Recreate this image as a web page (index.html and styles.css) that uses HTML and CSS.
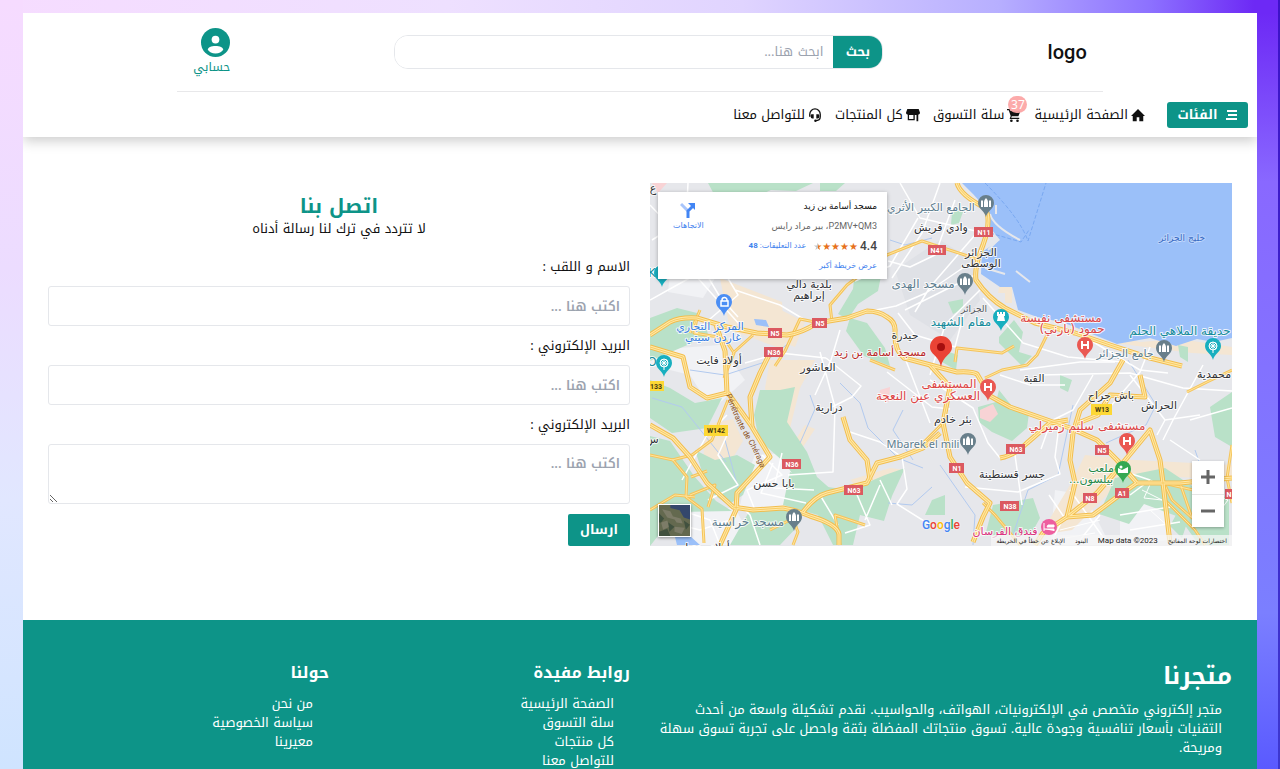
FILE: index.html
```html
<!DOCTYPE html>
<html lang="ar" dir="rtl">
<head>
<meta charset="utf-8">
<meta name="viewport" content="width=device-width, initial-scale=1">
<title>اتصل بنا</title>
<link rel="stylesheet" href="styles.css">
</head>
<body>
<div class="page">
  <header class="header">
    <div class="topbar">
      <a class="logo" href="#">logo</a>
      <form class="search">
        <button class="search-button" type="button">بحث</button>
        <input class="search-input" type="search" placeholder="ابحث هنا..." aria-label="بحث">
      </form>
      <a class="account" href="#">
        <svg class="account-icon" viewBox="0 0 30 30" aria-hidden="true"><circle cx="15" cy="15" r="15" fill="#0d9488"/><circle cx="15" cy="12" r="4" fill="#fff"/><path d="M7 22.5c0-2.700 3.600-4 8-4s8 1.300 8 4c-1.500 2.400-4.400 4-8 4s-6.500-1.600-8-4Z" fill="#fff"/></svg>
        <span>حسابي</span>
      </a>
    </div>
    <nav class="nav">
      <button class="categories" type="button">
        <svg class="menu-icon" viewBox="0 0 12 12" aria-hidden="true"><path d="M1 2h10M2 6h9M0 10h11" stroke="#fff" stroke-width="2"/></svg>
        <span>الفئات</span>
      </button>
      <a class="nav-link" href="#">
        <svg class="nav-icon" viewBox="0 0 16 16" aria-hidden="true"><path d="M8 1 0 9H2V15H6.500V10.500h3V15H14V9h2Z"/></svg>
        <span>الصفحة الرئيسية</span>
      </a>
      <a class="nav-link" href="#">
        <svg class="nav-icon" viewBox="0 0 16 16" aria-hidden="true"><path d="M0 1h3l1 2h11.500L13 9.500H5.500L4.800 11H14v1.500H3L4.200 9 2 2.500H0Z"/><circle cx="5" cy="14.500" r="1.500"/><circle cx="12" cy="14.500" r="1.500"/></svg>
        <span class="badge">37</span>
        <span>سلة التسوق</span>
      </a>
      <a class="nav-link" href="#">
        <svg class="nav-icon" viewBox="0 0 16 16" aria-hidden="true"><path d="M1.500 1h13L16 5.500c0 1.500-1 2-2 2V15h-2V8H10v6H2V7.500c-1 0-2-.5-2-2ZM3.500 8v4.500h5V8Z" fill-rule="evenodd"/></svg>
        <span>كل المنتجات</span>
      </a>
      <a class="nav-link" href="#">
        <svg class="nav-icon" viewBox="0 0 16 16" aria-hidden="true"><path d="M2 10V7a6 6 0 0 1 12 0v3c0 3-2 4.500-5.500 4.500" fill="none" stroke="#111" stroke-width="1.500"/><path d="M4 7h2.500v5H5Q3 12 3 9.500T4 7ZM9.500 7H12q1 0 1 2.500T11 12H9.500Z"/><circle cx="8.500" cy="14.500" r="1.400"/></svg>
        <span>للتواصل معنا</span>
      </a>
    </nav>
  </header>

  <main class="contact">
    <section class="map" aria-label="خريطة">
      <svg class="map-canvas" viewBox="650 183 582 363" preserveAspectRatio="xMidYMid slice" role="img" aria-label="خريطة الجزائر">
        <defs>
          <g id="pin"><path d="M0 13C-1 7-8 5-8-1a8 8 0 0 1 16 0C8 5 1 7 0 13Z"/></g>
          <g id="mosque" fill="#fff"><path d="M-5 3v-6l1-1 1 1v6ZM3 3v-6l1-1 1 1v6ZM-2 3v-5Q-2-4 0-6 2-4 2-2v5Z"/></g>
          <g id="hospital"><path d="M-3-5V3M3-5V3M-3-1H3" stroke="#fff" stroke-width="2" fill="none"/></g>
          <g id="roads">
            <path d="M957 183q3 12 28 25 7 12-2 37-9 22-7 35 12 18 29 28l30 15 40 10 35 12 40 13 32 8"/>
            <path d="M650 335l20-13q10-5 27-4l30 9 30 6 30 2q15-2 30-12l30-5 20-7q12 0 20 6 9 5 8 15-1 18 9 26l53 14q14-1 20 2l13 22 20 11 60 21 27 12 20 20 20 23 43 0 52-5"/>
            <path d="M650 425l23 13 17 19 17 26 26 24 20 3 30-2q16 3 27 8 27 8 29 18l0 11"/>
            <path d="M650 347l33 10 7 30 17 11 20-5-2-42-9-26M770 353l-10 20-10 24 2 30 18 30-33 36-1 17-16 35M728 393l25 35"/>
            <path d="M803 512q12-16 24-19l40-10 10-20 23-6 23-9 17-15M843 417l7 23 17 20 3 20"/>
            <path d="M930 365l20 22-7 36 7 34 17 26 23 20-7 14-10 25"/>
            <path d="M1123 360l-13 23-30 27-7 23-3 27 5 23-8 34-24 16-8 12"/>
            <path d="M1067 517l30-24 20-23 33-40 10 30 3 23 7 60M1067 517l26-2 24-18 20-14M1000 458q15-3 27-15l23-20 18-3M1078 423l20-8 12-20 35 2-5-22"/>
          </g>
          <g id="minor-roads">
            <path d="M650 455l23 5 14 17-1 20 16 12 2 34M672 460l20-5 20-15 16-40M691 477l16-6M690 495l25-10-7 22M650 510l25-15 20 2"/>
            <path d="M955 362l2-14 45 5 12-7M1047 335l-10 20-10 10-25 5-17 8M832 322l-2-17 17-20 40-30 35-14 55 18M820 323l-20-4-8 17-7 15-10 15M697 318l-3 15 30 5 10 15-10 25M700 310l-10 23M733 353l20-18"/>
            <path d="M1187 392l20-10 25-12M1232 445l-5 33 5 25M1180 483l12 35-20-18-8-17M1163 483l30 7 27-8M840 545l-5-30 30 10M1165 500l30 30 10 15M790 512l8 20-5 13M770 530l30-15M943 423l-25 25M1020 545l-25-30-12-12M870 360l25 10"/>
          </g>
        </defs>
        <rect x="650" y="183" width="582" height="363" fill="#e6e7eb"/>
        <g fill="#f1f2f5">
          <path d="M652 350 720 345 745 380 712 410 690 375 650 365Z"/>
          <path d="M755 455 790 453 812 490 800 512 740 506 745 480Z"/>
          <path d="M672 255 720 270 703 298 668 292Z"/>
          <path d="M680 508h55l20 37h-75Z"/><path d="M1055 490l30 5 25 50h-60Z"/>
          <path d="M1120 510l45-15 5 45-50 5Z"/>
        </g>
        <path d="M895 270 940 240 972 260 980 300 950 340 910 315Z" fill="#dfe1e6"/>
        <g fill="#f4e6d3">
          <path d="M720 278 782 302 785 350 730 330Z"/><path d="M770 360h45l-15 28-10 40 5 20-12 8-18-68Z"/>
          <path d="M705 425l28-6 10 22-22 37-18-10Z"/><path d="M775 307l30 15-10 25-25-10Z"/>
          <path d="M1000 283h12v20h-7v-10h-7ZM1065 325l75 17 40-3 52 8v8l-40-2-70-9Z"/>
          <path d="M1085 455l50 5 97 5v15l-90-5-25 10-45 45-32 5 30-50Z"/><path d="M850 480l40-12 15 2-15 12-30 8Z"/>
          <path d="M805 425l10 4-20 30-4-12Z"/>
        </g>
        <g fill="#b9e1c8">
          <path d="M708 183h105l-17 8-25-1-18 8h-37ZM820 183h25l-9 8h-16Z"/>
          <path d="M650 318l27-10 20 5-5 30-42 18ZM686 325l20 2 3 11-18 4Z"/>
          <path d="M850 318l17 5 18 25 5 18-26-10-18-25Z"/><path d="M855 270l28-4-5 25-20 13-10 15-10-5 15-25Z"/>
          <path d="M760 390l20 0 15-3-8 35 20 30 10 25 17 15-25 5-25-35-25-22-5-25Z"/>
          <path d="M650 380l20 8 25 15 27-5-15 30-35 5-22-15Z"/>
          <path d="M650 436l20 5 24 35 22 25 16 10-55 1-27 34ZM695 450l20 10 22-5 18 10-12 30-15 10-20-15Z"/>
          <path d="M790 472l30 14 30 4 35-15 20-7-13 28-8 25-24-6-7 30h-20l-15-30-35-10ZM750 510l38-2 10 18-18 19h-50Z"/>
          <path d="M978 407l18-5 3-12 12 15 18 8-2 15-15 13-20-9-13-10Z"/>
          <path d="M999 337l15-17 9 12-4 20 13 4-10 10-23-23Z"/><path d="M948 302l15-3v10l-10 5ZM943 350l15 5-2 15-14-8ZM952 212l12-3-5 14-8 2Z"/>
          <path d="M1115 478l50-10 30 20 34 10v47h-30l-20-28-35-13-15 20-30-10 10-22Z"/>
          <path d="M993 505l40-7 7 20-10 18h-45ZM1210 407l22-15v55l-17-10ZM932 500l13-5v20h-20ZM1178 345l10 2v15l-8-5Z"/>
          <path d="M1060 375l12 5-4 12-8-4ZM1177 513l10 10-5 15-12-12Z"/>
        </g>
        <path fill="#9bc0f9" d="M962 183H1232V338L1214 342 1197 339 1176 346 1150 338 1117 344 1082 330 1062 322 1040 318 1018 310 1012 287H1000L981 274 982 252 1000 240 988 225 984 206 973 194Z"/>
        <path d="M996 205v9M990 214q3 12 30 26M1016 271l14 11M985 268l20 6M988 250l10-10" stroke="#e6e7eb" stroke-width="2" fill="none"/>
        <path d="M985 183q35 35 43 58l18-58M990 233l31 9 8-12" stroke="#79a8f1" fill="none" stroke-dasharray="4 2"/>
        <g fill="#9bc0f9"><path d="M675 537l15-1 10 9h-23ZM754 319l12 1 3 7-13-2Z"/></g>
        <g fill="#f8d3d5"><path d="M980 410l13-6 5 10-8 8-10-4ZM880 390l10-3-1 15-10-4ZM652 183h15l-9 10Z"/></g>
        <g fill="none" stroke="#b2caef">
          <path d="M690 370l35 5 40-13 25-20M652 398l30 9 20 25 24 30M800 443l15-34-5-14M840 383l20 20 8 25 30 30 25 10M903 410l-10 20 20 30M1073 405l-15 70-30 15-15 45M940 465l35 50-2 30M1128 360l28 45-10 20-40 18M1195 450l7 20-8 30M890 240l15 5 27-7M725 440l15 55M888 503l24 2 20-18"/>
        </g>
        <g class="streets">
          <path d="M652 240l40-25 12-20M650 205l40 42 30 50 18 20M688 183l-3 60-33 28M670 250l50 15 18 30-35 30M735 290l45 15 25 15M650 300l45-25 45 50"/>
          <path d="M900 183l20 35 60 14M918 218l-28 48-35 15M940 183l-18 50-30 45M955 200l-20 55-25 12-22-6M975 235l-45 52-15 25M970 263l-44 30-30 13-25 5M975 275l-70 35M980 290l-35 35-15 50M965 309l-10 38-40-12-17-22M983 298l40 45 45 14 55 5"/>
          <path d="M820 352l15 55-2 65-45 3M832 407l20-10 9-11-35-28M840 330l-9 30-16 35M826 358l-46-5-35 10M905 358l25 65M887 372l45 35 18 2M850 432l30 10 22 15 5 32-10 15 35 22"/>
          <path d="M1020 370l60-8 35 0M1040 375l90-2 53 15 49 3M1060 418l-5 39 5 17-42 18-53-5M1015 455l7 50M930 380l43 28 15 35 12 15M1130 375l35 45-8 15M1150 347l-10 25-30 35-30 15M1000 375l30 10 35 0M1093 375l-20 35-22 11-10 28M1165 420l35-5M1203 365l-30 55-10 20M1090 340l50 30 28 3"/>
          <path d="M740 505l10 10 10 30M708 500l30-15-20-30 10-22M682 480l25-45 20-20M680 510l30 10 10 25M660 520l40 10 30-10M762 455l20 20-35 15 8 20M773 463l-12 30 45 10M782 453l-8 35 40 2M855 490l15 35-25 8M880 485l-15 35M820 495l18 30M880 480l12 25"/>
          <path d="M1070 490l35 50M1080 540l20-25M1120 515l50-8M1130 530l50-8M1120 470l30 10-20 15M1170 440l30 20M1190 420l42-12M1050 545l14-28-15-22"/>
        </g>
        <path d="M1200 490l28 10-15 20M1150 510l20 18M1142 490l20 10-18-2 8-18M1060 530l40-10M1065 538l30-5" stroke="#fff" fill="none"/>
        <use href="#minor-roads" class="minor-edge"/>
        <use href="#minor-roads" class="minor-middle"/>
        <use href="#roads" class="road-edge"/>
        <use href="#roads" class="road-middle"/>
        <use href="#roads" class="road-divider"/>
        <g class="shields">
          <g fill="#db5960"><rect x="974" y="227" width="19" height="10"/><rect x="928" y="245" width="18" height="10"/><rect x="812" y="318" width="15" height="10"/><rect x="768" y="328" width="14" height="10"/><rect x="764" y="347" width="19" height="10"/><rect x="782" y="459" width="19" height="10"/><rect x="844" y="485" width="19" height="10"/><rect x="949" y="463" width="15" height="10"/><rect x="1006" y="444" width="19" height="10"/><rect x="1095" y="445" width="14" height="10"/><rect x="1000" y="501" width="19" height="10"/><rect x="1083" y="493" width="14" height="10"/><rect x="1115" y="488" width="14" height="10"/><rect x="1225" y="489" width="14" height="10"/></g>
          <g fill="#fdd835"><rect x="1091" y="404" width="21" height="11"/><rect x="704" y="425" width="24" height="11"/><rect x="644" y="381" width="20" height="10"/></g>
          <g class="shield-light"><text x="984" y="235">N11</text><text x="937" y="253">N41</text><text x="820" y="326">N5</text><text x="775" y="336">N5</text><text x="774" y="355">N36</text><text x="792" y="467">N36</text><text x="854" y="493">N63</text><text x="957" y="471">N1</text><text x="1016" y="452">N63</text><text x="1102" y="453">N5</text><text x="1010" y="509">N38</text><text x="1090" y="501">N8</text><text x="1122" y="496">A1</text><text x="1229" y="497">N</text></g>
          <g class="shield-dark"><text x="1102" y="412">W13</text><text x="716" y="433">W142</text><text x="656" y="389">133</text></g>
        </g>
        <g class="labels">
          <g class="town"><text x="941" y="231">وادي قريش</text><text x="981" y="256">الجزائر</text><text x="981" y="267">الوسطى</text><text x="809" y="288">بلدية دالي</text><text x="809" y="299">إبراهيم</text><text x="905" y="339">حيدرة</text><text x="719" y="364">أولاد فايت</text><text x="818" y="371">العاشور</text><text x="829" y="411">درارية</text><text x="953" y="423">بئر خادم</text><text x="1034" y="382">القبة</text><text x="1111" y="399">باش جراح</text><text x="1159" y="409">الحراش</text><text x="1012" y="478">جسر قسنطينة</text><text x="774" y="487">بابا حسن</text><text x="1214" y="378">محمدية</text><text x="705" y="551">أولاد منديل</text><text x="653" y="192">ع</text><text x="652" y="443">س</text></g>
          <text class="small" x="974" y="312" fill="#55585e">الجزائر</text>
          <g class="poi" fill="#5d7d8f"><text x="931" y="211" class="compact">الجامع الكبير الأثري</text><text x="923" y="288">مسجد الهدى</text><text class="latin" x="923" y="448">Mbarek el mili</text><text x="748" y="526">مسجد خراسية</text><text x="1125" y="357" class="compact">جامع الجزائر</text></g>
          <g class="poi" fill="#168b9b"><text x="961" y="326">مقام الشهيد</text><text x="1180" y="335">حديقة الملاهي الحلم</text><text x="652" y="277">K</text><text x="652" y="366">O</text></g>
          <g class="poi" fill="#dd4545"><text x="1061" y="322">مستشفى نفيسة</text><text x="1072" y="333">حمود (بارني)</text><text x="949" y="388">المستشفى</text><text x="928" y="400">العسكري عين النعجة</text><text x="1087" y="430">مستشفى سليم زميرلي</text></g>
          <text x="880" y="356" fill="#b92727">مسجد أسامة بن زيد</text>
          <g fill="#397ee3"><text x="710" y="330">المركز التجاري</text><text x="713" y="341">غاردن سيتي</text></g>
          <g fill="#248849"><text x="1101" y="472">ملعب</text><text x="1091" y="483" direction="rtl">بيلسون...</text></g>
          <text x="1005" y="535" fill="#db317e">فندق الفرسان</text>
          <text class="small" x="1182" y="241" fill="#396bc4">خليج الجزائر</text>
        </g>
        <path id="penetrante" d="M726 395Q736 423 747 440T763 478" fill="none"/>
        <text class="road-name"><textPath href="#penetrante">Pénétrante de Chéraga</textPath></text>
        <g fill="#687f8b"><use href="#pin" x="986" y="204"/><use href="#pin" x="965" y="282"/><use href="#pin" x="968" y="442"/><use href="#pin" x="794" y="518"/><use href="#pin" x="1164" y="349"/></g>
        <use href="#mosque" x="986" y="204"/><use href="#mosque" x="965" y="282"/><use href="#mosque" x="968" y="442"/><use href="#mosque" x="794" y="518"/><use href="#mosque" x="1164" y="349"/>
        <g fill="#ea5852"><use href="#pin" x="1085" y="346"/><use href="#pin" x="988" y="388"/><use href="#pin" x="1127" y="442"/></g>
        <use href="#hospital" x="1085" y="346"/><use href="#hospital" x="988" y="388"/><use href="#hospital" x="1127" y="442"/>
        <g fill="#18afbf"><use href="#pin" x="1001" y="318"/><use href="#pin" x="1213" y="347"/><use href="#pin" x="664" y="364"/><use href="#pin" x="662" y="274"/></g>
        <path d="M997 312h2v2h1v-2h2v2h1v-2h2v4h-1l1 5h-8l1-5h-1Z" fill="#fff"/>
        <g fill="none" stroke="#fff"><circle cx="1213" cy="346" r="4"/><path d="M1209 346h8M1213 342v11M1210 343l6 6M1216 343l-6 6"/><circle cx="664" cy="363" r="4"/><path d="M660 363h8M664 359v11M661 360l6 6M667 360l-6 6"/></g>
        <use href="#pin" x="724" y="303" fill="#4b8ef4"/><path d="M721 301h7v5h-7ZM722 301v-1a2.500 2.500 0 0 1 5 0v1" fill="none" stroke="#fff" stroke-width="1.500"/>
        <use href="#pin" x="1123" y="470" fill="#34a853"/><path d="M1118 468l4 2 6-3v6h-10Z" fill="#fff"/><circle cx="1121" cy="467" r="1.500" fill="#fff"/>
        <circle cx="1049" cy="527" r="8" fill="#ee5f9f"/><path d="M1044 523v8M1044 529h10v2M1047 527h7v-2h-6Z" stroke="#fff" fill="#fff"/>
        <path d="M941 367C939 355 930 355 930 347a11 11 0 0 1 22 0C952 355 943 355 941 367Z" fill="#ea4335"/><circle cx="941" cy="347" r="4" fill="#a50e0e"/>
      </svg>
      <article class="place-card">
        <div class="place-info">
          <strong class="place-name">مسجد أسامة بن زيد</strong>
          <span class="place-address">P2MV+QM3، بير مراد رايس</span>
          <span class="rating"><b>4.4</b><span class="stars" aria-hidden="true">★★★★<span class="half-star">★</span></span><a href="#">عدد التعليقات: <b>48</b></a></span>
          <a href="#">عرض خريطة أكبر</a>
        </div>
        <a class="directions" href="#">
          <svg class="directions-icon" viewBox="0 0 16 16" aria-hidden="true"><path d="M1 2l7 7" stroke="#a8c5fb" stroke-width="3"/><path d="M8 16V9l5-5" stroke="#4285f4" stroke-width="3" fill="none"/><path d="M8 1h7v7Z" fill="#4285f4"/></svg>
          <span>الاتجاهات</span>
        </a>
      </article>
      <div class="zoom-control">
        <button type="button" aria-label="تكبير"><svg viewBox="0 0 14 14"><path d="M0 7h14M7 0v14" stroke="#666" stroke-width="3"/></svg></button>
        <button type="button" aria-label="تصغير"><svg viewBox="0 0 14 14"><path d="M0 7h14" stroke="#666" stroke-width="3"/></svg></button>
      </div>
      <button class="satellite" type="button" aria-label="قمر صناعي"><svg viewBox="0 0 30 30"><path fill="#64694f" d="M0 0h30v30H0z"/><path fill="#34476c" d="M11 0h19v14l-6-2-4-7-9-2Z"/><path fill="#7d7c68" d="M3 4l8 2 4 8-7-2ZM2 17l6-2 2 6-6 3ZM13 11l8 2 2 5-6-1ZM15 21l10 1-3 6-7-2Z"/><path fill="#41513f" d="M0 8l5 5-3 4H0ZM9 17l6 4-5 5ZM24 15l6 4-4 5ZM0 26l8-3 3 7H0Z"/></svg></button>
      <div class="google" aria-label="Google" dir="ltr"><span class="g-blue">G</span><span class="g-red">o</span><span class="g-yellow">o</span><span class="g-blue">g</span><span class="g-green">l</span><span class="g-red">e</span></div>
      <div class="attribution"><span>اختصارات لوحة المفاتيح</span><span class="copyright" dir="ltr">Map data ©2023</span><span>البنود</span><span>الإبلاغ عن خطأ في الخريطة</span></div>
    </section>

    <form class="contact-form">
      <div class="form-heading"><h1>اتصل بنا</h1><p>لا تتردد في ترك لنا رسالة أدناه</p></div>
      <div class="field"><label for="name">الاسم و اللقب :</label><input id="name" type="text" placeholder="اكتب هنا ..."></div>
      <div class="field"><label for="email">البريد الإلكتروني :</label><input id="email" type="email" placeholder="اكتب هنا ..."></div>
      <div class="field"><label for="message">البريد الإلكتروني :</label><textarea id="message" placeholder="اكتب هنا ..."></textarea></div>
      <button class="submit" type="button">ارسال</button>
    </form>
  </main>

  <footer class="footer">
    <section class="about"><h2>متجرنا</h2><p>متجر إلكتروني متخصص في الإلكترونيات، الهواتف، والحواسيب. نقدم تشكيلة واسعة من أحدث التقنيات بأسعار تنافسية وجودة عالية. تسوق منتجاتك المفضلة بثقة واحصل على تجربة تسوق سهلة ومريحة.</p></section>
    <nav class="footer-links"><h3>روابط مفيدة</h3><ul><li><a href="#">الصفحة الرئيسية</a></li><li><a href="#">سلة التسوق</a></li><li><a href="#">كل منتجات</a></li><li><a href="#">للتواصل معنا</a></li></ul></nav>
    <nav class="footer-links"><h3>حولنا</h3><ul><li><a href="#">من نحن</a></li><li><a href="#">سياسة الخصوصية</a></li><li><a href="#">معيرينا</a></li></ul></nav>
  </footer>
</div>
</body>
</html>
```
FILE: styles.css
```css
* { box-sizing: border-box; }
body {
  margin: 0;
  height: 100vh;
  overflow: hidden;
  padding: 13px 23px 0;
  font-family: "Noto Kufi Arabic", "DejaVu Sans", sans-serif;
  font-size: 13px;
  line-height: 20px;
  color: #111;
  background:
    linear-gradient(#3d12c8, #3d38d0) right top / 2px 100% no-repeat,
    linear-gradient(#6d29f5, #8968ff 22%, #7b7fff 78%, #5757ff) right 13px / 23px 100% no-repeat,
    linear-gradient(#f6dbff, #ecdcff 35%, #e1e7ff 65%, #cfe4ff) left top / 23px 100% no-repeat,
    linear-gradient(to right, #f6dcff, #eee0ff 35%, #e0d4ff 58%, #b7afff 78%, #8c70ff 90%, #6d29f5 98%);
}
a { color: inherit; text-decoration: none; }
button, input, textarea { font: inherit; }
button { border: 0; padding: 0; cursor: pointer; }
h1, h2, h3, p, ul { margin: 0; padding: 0; }
ul { list-style: none; }
svg { display: block; }

.page { min-height: 100%; overflow: clip; background: #fff; }
.header { box-shadow: 0 4px 12px rgba(0, 0, 0, 0.2); }
.topbar {
  display: flex;
  justify-content: space-between;
  align-items: center;
  width: 75%;
  height: 79px;
  margin: 0 auto;
  padding: 0 16px;
  border-bottom: 1px solid #e8e8ea;
}
.logo { font-family: Roboto, sans-serif; font-size: 20px; font-weight: 500; }
.search {
  display: flex;
  flex: 0 1 489px;
  height: 34px;
  border: 1px solid #e5e7eb;
  border-radius: 14px;
  overflow: hidden;
}
.search-button { flex: 0 0 49px; background: #0d9488; color: #fff; font-weight: 700; }
.search-input { flex: 1; min-width: 0; border: 0; padding: 0 10px; outline: 0; background: #fff; }
.account { display: flex; flex-direction: column; align-items: flex-start; color: #0d9488; font-size: 12px; }
.account-icon { width: 29px; height: 29px; }

.nav { display: flex; align-items: center; height: 45px; padding: 0 9px; gap: 13px; }
.categories {
  display: flex;
  align-items: center;
  justify-content: center;
  gap: 8px;
  width: 81px;
  height: 26px;
  margin-left: 9px;
  border-radius: 3px;
  background: #0d9488;
  color: #fff;
  font-weight: 700;
}
.menu-icon { width: 12px; height: 12px; }
.nav-link { position: relative; display: flex; align-items: center; gap: 3px; white-space: nowrap; }
.nav-icon { width: 14px; height: 14px; fill: #111; }
.badge {
  position: absolute;
  top: -9px;
  right: -6px;
  width: 19px;
  height: 17px;
  border-radius: 9px;
  background: rgba(252, 165, 165, 0.95);
  color: #fff;
  font-family: "Noto Sans", sans-serif;
  font-size: 12px;
  line-height: 17px;
  text-align: center;
}

.contact { display: grid; grid-template-columns: 1fr 1fr; gap: 20px; padding: 46px 25px 74px; }
.map { position: relative; overflow: hidden; }
.map-canvas { position: absolute; inset: 0; width: 100%; height: 100%; direction: ltr; }
.streets { fill: none; stroke: #fff; stroke-width: 1.5; stroke-linejoin: round; }
.road-edge { fill: none; stroke: #f2bd4d; stroke-width: 5; stroke-linejoin: round; }
.road-middle { fill: none; stroke: #ffe8a8; stroke-width: 3; stroke-linejoin: round; }
.road-divider { fill: none; stroke: #f8cb62; stroke-width: 1; stroke-linejoin: round; }
.minor-edge { fill: none; stroke: #f5c45c; stroke-width: 3; stroke-linejoin: round; }
.minor-middle { fill: none; stroke: #ffe59c; stroke-width: 1; stroke-linejoin: round; }
.map-canvas text { text-anchor: middle; }
.shields { font: 700 7px Roboto, sans-serif; }
.shield-light { fill: #fff; }
.shield-dark { fill: #473b14; }
.labels { font-family: "DejaVu Sans", sans-serif; font-size: 11px; stroke: #fff; stroke-width: 2px; stroke-opacity: 0.8; paint-order: stroke; stroke-linejoin: round; }
.town { fill: #303236; }
.poi { font-size: 12px; }
.labels .compact { font-size: 11px; }
.labels .latin { font-family: "Noto Sans", sans-serif; font-size: 11px; }
.labels .small { font-size: 9px; stroke-opacity: 0.3; }
.map-canvas .road-name { font: 8px Roboto, sans-serif; fill: #8b5427; text-anchor: start; }

.place-card {
  position: absolute;
  top: 9px;
  left: 8px;
  display: flex;
  justify-content: space-between;
  width: 229px;
  height: 87px;
  padding: 4px 10px;
  background: #fff;
  box-shadow: 0 1px 4px rgba(0, 0, 0, 0.3);
  font-family: Roboto, "DejaVu Sans", sans-serif;
  font-size: 9px;
}
.place-card a { color: #3f82ee; font-size: 8px; }
.place-info { display: flex; flex-direction: column; white-space: nowrap; }
.place-name { font-weight: 500; }
.place-address { color: #666; }
.rating { display: flex; align-items: center; gap: 2px; }
.rating > b { font-size: 12px; font-weight: 500; color: #444; }
.stars { color: #e7711b; font: 10px "DejaVu Sans", sans-serif; }
.half-star { background: linear-gradient(to left, #e7711b 50%, #c4c4c4 50%); background-clip: text; color: transparent; }
.rating a { margin-right: 5px; }
.place-card .directions { display: flex; flex-direction: column; align-items: center; padding: 6px 5px; line-height: 16px; }
.directions-icon { width: 16px; height: 16px; }
.zoom-control { position: absolute; right: 8px; bottom: 19px; display: grid; width: 32px; height: 66px; background: #fff; box-shadow: 0 1px 3px rgba(0, 0, 0, 0.3); }
.zoom-control button { display: grid; place-items: center; background: #fff; }
.zoom-control button + button { border-top: 1px solid #e6e6e6; }
.zoom-control svg { width: 14px; height: 14px; }
.satellite { position: absolute; left: 8px; bottom: 9px; width: 33px; height: 33px; border: 1px solid #fff; box-shadow: 0 1px 3px rgba(0, 0, 0, 0.4); }
.satellite svg { width: 100%; height: 100%; }
.google { position: absolute; right: 272px; bottom: 11px; font: 500 12px/20px Roboto, sans-serif; text-shadow: 0 0 2px #fff; }
.g-blue { color: #4285f4; }
.g-red { color: #ea4335; }
.g-yellow { color: #fbbc05; }
.g-green { color: #34a853; }
.attribution { position: absolute; right: 0; bottom: 0; display: flex; gap: 10px; padding: 0 5px; background: rgba(245, 245, 245, 0.75); font: 6px/11px "DejaVu Sans", sans-serif; color: #222; white-space: nowrap; }
.copyright { font-family: Roboto, sans-serif; font-size: 8px; }

.contact-form { display: flex; flex-direction: column; align-items: stretch; padding-top: 10px; }
.form-heading { text-align: center; margin-bottom: 18px; }
.form-heading h1 { color: #0d9488; font-size: 20px; line-height: 26px; }
.field { display: flex; flex-direction: column; gap: 9px; margin-bottom: 10px; }
.field input, .field textarea {
  width: 100%;
  height: 40px;
  padding: 9px;
  border: 1px solid #e5e7eb;
  border-radius: 3px;
  background: #fff;
  outline: 0;
  font-weight: 600;
}
.field textarea { display: block; height: 60px; resize: both; }
::placeholder { color: #9ca3af; opacity: 1; }
.submit { align-self: flex-start; width: 62px; height: 32px; border-radius: 2px; background: #0d9488; color: #fff; font-weight: 700; }

.footer { display: grid; grid-template-columns: repeat(4, 1fr); gap: 20px; padding: 40px 25px 0; background: #0d9488; color: #fff; line-height: 19px; }
.about { grid-column: span 2; }
.about h2 { font-size: 24px; line-height: 32px; }
.about p { padding: 8px 10px 0 0; }
.footer-links h3 { font-size: 16px; line-height: 26px; }
.footer-links ul { padding: 8px 16px 0; }
```
